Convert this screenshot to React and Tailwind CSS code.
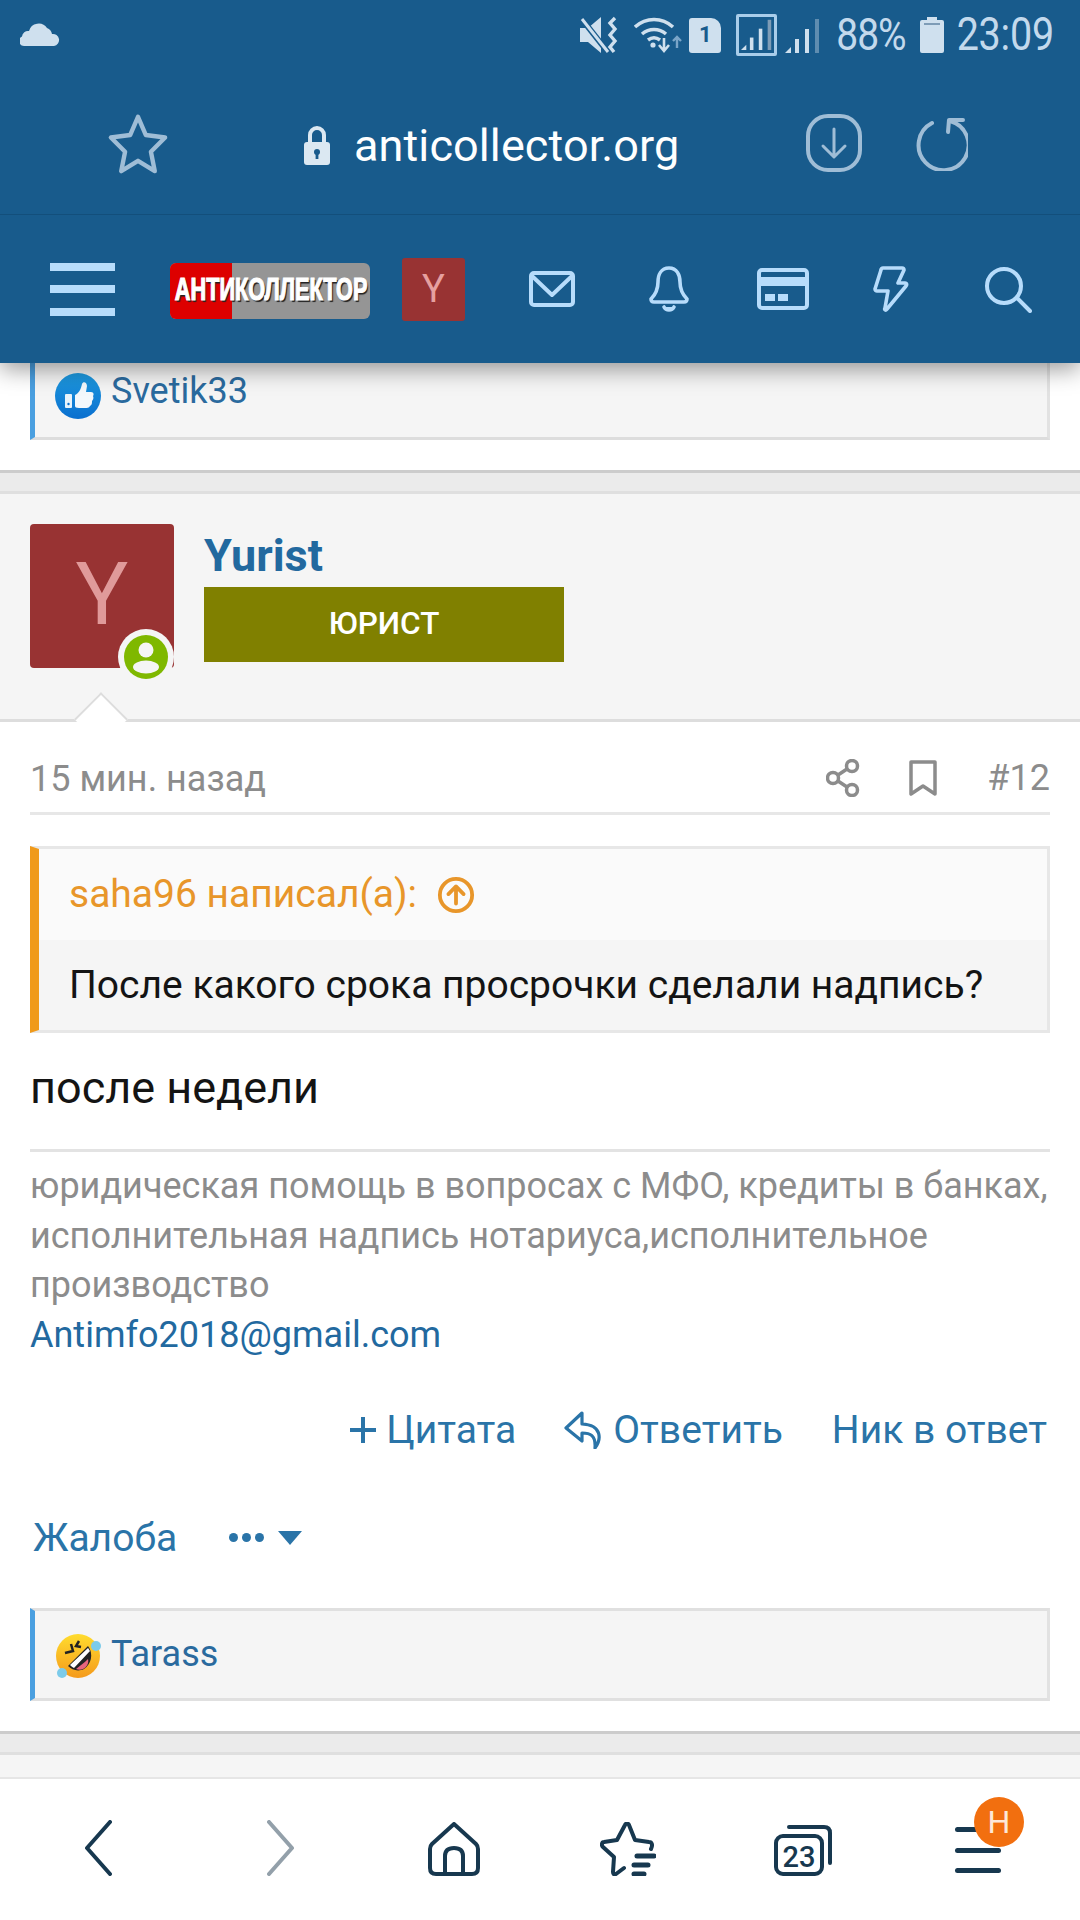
import React from "react";

const NavIcon = ({ className, children, vb = "0 0 48 48", sw = 4 }) => (
  <svg viewBox={vb} className={className} fill="none" stroke="currentColor" strokeWidth={sw} strokeLinecap="round" strokeLinejoin="round">
    {children}
  </svg>
);

function StatusBar() {
  return (
    <div className="h-[70px] flex items-center pl-[20px] pr-[26px] text-[#c3d9ec]">
      <svg viewBox="0 0 40 24" className="w-[40px] h-[24px] mt-[-2px]" fill="#cfe0ee">
        <path d="M4 24a5 5 0 0 1-2-9.5A6 6 0 0 1 9 9a10 10 0 0 1 18-3 8 8 0 0 1 5 6 6 6 0 0 1 2 12z" />
      </svg>
      <div className="ml-auto flex items-center h-full">
        <svg viewBox="0 0 40 38" className="w-[40px] h-[38px]" fill="#cfe0ee">
          <path d="M0 12h8L21 1v36L8 26H0z" />
          <path d="M1 2l26 33" stroke="#185b8c" strokeWidth="6" />
          <path d="M2 3l26 33" stroke="#cfe0ee" strokeWidth="3" />
          <path d="M35 2l-5 5 5 6-5 6 5 6-5 6 4 5" fill="none" stroke="#cfe0ee" strokeWidth="3.4" />
        </svg>
        <svg viewBox="0 0 48 38" className="w-[48px] h-[38px] ml-[14px]" fill="none" stroke="#cfe0ee" strokeWidth="3.5">
          <path d="M1 11c11-10 27-10 38 0" />
          <path d="M8 18c7-6 17-6 24 0" />
          <path d="M14 24c4-3 8-3 12 0" />
          <circle cx="19" cy="29" r="2.6" fill="#cfe0ee" stroke="none" />
          <path d="M30 22v12M25 29l5 6 5-6" strokeWidth="2.6" />
          <path d="M43 32V21M39 25l4-4 4 4" stroke="#7aa5c8" strokeWidth="2.4" />
        </svg>
        <div className="ml-[7px] w-[32px] h-[35px] bg-[#cfe0ee] rounded-[3px] rounded-tr-[10px] flex items-center justify-center text-[#185b8c] text-[22px] font-bold leading-none">1</div>
        <div className="ml-[15px] w-[41px] h-[42px] border-[3px] border-[#a9cdea] rounded-[2px] flex items-end justify-center pb-[2px]">
          <Bars dim />
        </div>
        <div className="ml-[8px] h-[38px] w-[36px] flex items-end"><Bars small /></div>
        <span className="ml-[15px] text-[39px] leading-none scale-y-[1.15] tracking-[-1px]">88%</span>
        <svg viewBox="0 0 24 36" className="ml-[14px] w-[24px] h-[36px]" fill="#cfe0ee">
          <path d="M7 0h10v3h5a2 2 0 0 1 2 2v29a2 2 0 0 1-2 2H2a2 2 0 0 1-2-2V5a2 2 0 0 1 2-2h5z" />
          <rect x="4" y="6" width="16" height="2" fill="#7e9cb6" />
        </svg>
        <span className="ml-[13px] text-[39.5px] leading-none scale-y-[1.15] tracking-[-0.2px]">23:09</span>
      </div>
    </div>
  );
}

function Bars({ dim, small }) {
  return (
    <svg viewBox="0 0 36 36" className={small ? "w-[36px] h-[38px]" : "w-[32px] h-[34px]"} fill="#cfe0ee">
      <path d="M0 36l6-6v6z" />
      <rect x="10" y="22" width="4" height="14" />
      <rect x="20" y="12" width="4" height="24" />
      <rect x="30" y="2" width="4" height="34" fill={dim ? "#7e9cb6" : "#5f8db0"} />
    </svg>
  );
}

function UrlBar() {
  return (
    <div className="h-[145px] relative flex items-center border-b border-[#134f7b] pt-[6px] text-[#9fbdd6]">
      <NavIcon className="ml-[107px] w-[62px] h-[62px] mt-[-2px]" vb="0 0 48 48" sw={3.4}>
        <path d="M24 3l6 14 15 2-11 11 3 15-13-8-13 8 3-15L3 19l15-2z" />
      </NavIcon>
      <svg viewBox="0 0 28 40" className="ml-[134px] w-[28px] h-[40px]">
        <path d="M7 18v-8a7 7 0 0 1 14 0v8" fill="none" stroke="#dbe8f2" strokeWidth="4" />
        <rect x="1" y="17" width="26" height="23" rx="3" fill="#dbe8f2" />
        <circle cx="14" cy="27" r="3" fill="#185b8c" />
        <rect x="12.6" y="27" width="2.8" height="7" fill="#185b8c" />
      </svg>
      <span className="ml-[23px] text-[45px] leading-none text-white tracking-[0.1px]">anticollector.org</span>
      <NavIcon className="ml-auto w-[56px] h-[58px] mt-[-4px]" vb="0 0 56 58" sw={4}>
        <rect x="2" y="2" width="52" height="54" rx="20" />
        <path d="M28 15v27M17 32l11 11 11-11" strokeWidth="3" />
      </NavIcon>
      <NavIcon className="ml-[50px] mr-[112px] w-[56px] h-[56px] mt-[-4px]" vb="0 0 56 56" sw={4}>
        <path d="M20 8A25 25 0 1 0 38 6" />
        <path d="M36 17l1-12 14 0" strokeWidth="4" />
      </NavIcon>
    </div>
  );
}

function TopNav() {
  return (
    <div className="h-[148px] flex items-center pl-[50px] text-[#b7dcfb]">
      <div className="w-[65px] h-[53px] flex flex-col justify-between">
        <div className="h-[8px] bg-[#b7dcfb]" />
        <div className="h-[8px] bg-[#b7dcfb]" />
        <div className="h-[8px] bg-[#b7dcfb]" />
      </div>
      <div className="ml-[55px] w-[200px] h-[56px] rounded-[6px] overflow-hidden bg-[#959595] flex mt-[3px] relative">
        <div className="w-[62px] bg-[#dd0000]" />
        <div className="flex-1" />
        <span className="absolute left-[-36px] w-[272px] top-[11px] text-center text-[31px] leading-[32px] font-bold text-white scale-x-[0.7] [font-family:'Liberation_Sans',sans-serif] [-webkit-text-stroke:1.2px_#ffffff] [text-shadow:2px_2px_1px_#222222]">АНТИКОЛЛЕКТОР</span>
      </div>
      <div className="ml-[32px] w-[63px] h-[63px] rounded-[3px] bg-[#983333] text-[#e6a0a0] text-[38px] flex items-center justify-center">Y</div>
      <NavIcon className="ml-[64px] w-[46px] h-[36px]" vb="0 0 46 36" sw={4}>
        <rect x="2" y="2" width="42" height="32" rx="3" />
        <path d="M3 5l20 19L43 5" />
      </NavIcon>
      <NavIcon className="ml-[73px] w-[42px] h-[46px]" vb="0 0 42 46" sw={3.6}>
        <path d="M21 2c-8 0-11 7-11 14 0 8-3 13-7 17 0 2 1 3 3 3h30c2 0 3-1 3-3-4-4-7-9-7-17 0-7-3-14-11-14z" />
        <path d="M16 41c2 4 8 4 10 0" fill="currentColor" />
      </NavIcon>
      <svg viewBox="0 0 52 42" className="ml-[67px] w-[52px] h-[42px]">
        <rect x="2" y="2" width="48" height="38" rx="3" fill="none" stroke="#b7dcfb" strokeWidth="4" />
        <rect x="2" y="9" width="48" height="9" fill="#b7dcfb" />
        <rect x="8" y="26" width="10" height="7" fill="#b7dcfb" />
        <rect x="21" y="26" width="10" height="7" fill="#b7dcfb" />
      </svg>
      <NavIcon className="ml-[64px] w-[36px] h-[46px]" vb="0 0 36 46" sw={3.6}>
        <path d="M10 2h19c2 0 2 1 2 2l-6 13h7c2 0 2 2 1 3L14 43c-1 2-3 1-2-1l3-17H4c-1 0-2-1-2-2L8 4c0-1 1-2 2-2z" />
      </NavIcon>
      <NavIcon className="ml-[75px] w-[48px] h-[47px]" vb="0 0 48 47" sw={4}>
        <circle cx="20" cy="20" r="17" />
        <path d="M33 32l13 13" />
      </NavIcon>
    </div>
  );
}

function ThumbIcon() {
  return (
    <svg viewBox="0 0 46 46" className="w-[46px] h-[46px]">
      <defs>
        <linearGradient id="thumb" x1="0" y1="0" x2="0" y2="1">
          <stop offset="0" stopColor="#1f9be0" />
          <stop offset="1" stopColor="#0a6fcf" />
        </linearGradient>
      </defs>
      <circle cx="23" cy="23" r="23" fill="url(#thumb)" />
      <rect x="10" y="21" width="7" height="14" rx="1" fill="#e8f3fb" />
      <circle cx="13.5" cy="31" r="1.2" fill="#0a6fcf" />
      <path d="M20 22c4-2 6-6 7-11 1-3 5-2 5 2l-1 6h5c3 0 3 3 2 4 1 2 0 4-1 5 0 2 0 4-2 5-1 2-3 2-5 2h-6c-3 0-4-1-4-2z" fill="#f3f8fc" />
    </svg>
  );
}

function LaughIcon() {
  return (
    <svg viewBox="0 0 46 46" className="w-[46px] h-[46px] mt-[4px]">
      <defs>
        <linearGradient id="laugh" x1="0" y1="0" x2="0" y2="1">
          <stop offset="0" stopColor="#ffdc2e" />
          <stop offset="1" stopColor="#f59a1c" />
        </linearGradient>
      </defs>
      <circle cx="23" cy="23" r="22" fill="url(#laugh)" />
      <path d="M13 33L33 13c6 8 3 18-4 23-6 3-12 1-16-3z" fill="#222" />
      <path d="M15 32l18-17c1 1 1 2 2 3L19 35c-2-1-3-2-4-3z" fill="#fff" />
      <path d="M21 36c4-3 9-7 12-10 1 4-1 8-5 10-2 1-5 1-7 0z" fill="#e8657d" />
      <path d="M10 20l8-2-2-7M24 8l-3 5 5 1" fill="none" stroke="#222" strokeWidth="2.5" />
      <circle cx="41" cy="13" r="5" fill="#7ccbea" />
      <circle cx="7" cy="40" r="5" fill="#7ccbea" />
    </svg>
  );
}

function ReactionBar({ icon, name, className }) {
  return (
    <div className={`mx-[30px] bg-[#f5f5f5] border-l-[5px] border-l-[#4a9fe0] flex items-center gap-[10px] pl-[20px] ${className}`}>
      {icon}
      <span className="text-[36px] leading-none text-[#2a6a9e]">{name}</span>
    </div>
  );
}

function Separator() {
  return <div className="h-[24px] bg-[#ebebeb] border-t-[3px] border-t-[#cccccc] border-b-[3px] border-b-[#dfdfdf]" />;
}

function PostHeader() {
  return (
    <div className="h-[228px] bg-[#f5f5f5] border-b-[3px] border-b-[#dddddd] relative pl-[30px] pt-[30px] flex">
      <div className="relative w-[144px] h-[144px] rounded-[4px] bg-[#983333] text-[#e09a9a] text-[88px] leading-none flex items-center justify-center pb-[4px]">
        Y
        <div className="absolute left-[88px] top-[105px] w-[56px] h-[56px] rounded-full bg-[#f5f5f5] flex items-center justify-center">
          <svg viewBox="0 0 44 44" className="w-[44px] h-[44px]">
            <circle cx="22" cy="22" r="22" fill="#7fb800" />
            <circle cx="22" cy="15" r="7.5" fill="#f5f5f5" />
            <ellipse cx="22" cy="32" rx="13" ry="6.5" fill="#f5f5f5" />
          </svg>
        </div>
      </div>
      <div className="ml-[30px] w-[360px] flex flex-col">
        <div className="h-[63px] text-[45px] leading-[63px] font-bold text-[#22699f]">Yurist</div>
        <div className="h-[75px] bg-[#808000] text-white text-[31.5px] font-medium flex items-center justify-center pb-[2px]">ЮРИСТ</div>
      </div>
      <div className="absolute left-[82px] bottom-[-19px] w-[38px] h-[38px] rotate-45 bg-white border-l-[2px] border-t-[2px] border-[#dddddd]" />
    </div>
  );
}

function PostMeta() {
  return (
    <div className="mx-[30px] h-[93px] pt-[24px] flex items-center border-b-[3px] border-b-[#e7e7e7] text-[#8c8c8c] text-[36px]">
      <span>15 мин. назад</span>
      <svg viewBox="0 0 34 38" className="ml-auto w-[34px] h-[38px] mt-[-2px]" fill="none" stroke="#8c8c8c" strokeWidth="3.5">
        <circle cx="26" cy="7" r="5.5" />
        <circle cx="7" cy="19" r="5.5" />
        <circle cx="26" cy="31" r="5.5" />
        <path d="M12 16l9-6M12 22l9 6" />
      </svg>
      <svg viewBox="0 0 28 36" className="ml-[49px] w-[28px] h-[36px] mt-[-2px]" fill="none" stroke="#8c8c8c" strokeWidth="3.5" strokeLinejoin="round">
        <path d="M2 2h24v32L14 26 2 34z" />
      </svg>
      <span className="ml-[50px] mt-[-2px]">#12</span>
    </div>
  );
}

function Quote() {
  return (
    <div className="mx-[30px] mt-[31px] border-l-[9px] border-l-[#f09a1a] border-y-[3px] border-r-[3px] border-y-[#e7e7e7] border-r-[#e7e7e7]">
      <div className="h-[91px] bg-[#fafafa] pl-[30px] flex items-center gap-[20px] text-[39px] text-[#e8962a]">
        <span>saha96 написал(а):</span>
        <svg viewBox="0 0 40 40" className="w-[38px] h-[38px]" fill="none" stroke="#e8962a" strokeWidth="4" strokeLinecap="round" strokeLinejoin="round">
          <circle cx="20" cy="20" r="17" />
          <path d="M20 29V12M12 19l8-8 8 8" />
        </svg>
      </div>
      <div className="h-[90px] bg-[#f5f5f5] pl-[30px] flex items-center text-[39px] text-[#141414]">
        После какого срока просрочки сделали надпись?
      </div>
    </div>
  );
}

function BottomBar() {
  return (
    <div className="mt-auto h-[143px] bg-white border-t-[2px] border-t-[#e6e6e6] flex items-end relative text-[#17384f] pb-[44px] pl-[84px]">
      <NavIcon className="w-[28px] h-[56px]" vb="0 0 28 56" sw={4}>
        <path d="M26 2L3 28l23 26" />
      </NavIcon>
      <NavIcon className="ml-[155px] w-[28px] h-[56px] text-[#93a0aa]" vb="0 0 28 56" sw={4}>
        <path d="M2 2l23 26L2 54" />
      </NavIcon>
      <NavIcon className="ml-[133px] w-[52px] h-[54px]" vb="0 0 52 54" sw={4}>
        <path d="M26 2L4 22c-1 1-2 3-2 5v19c0 4 2 6 6 6h36c4 0 6-2 6-6V27c0-2-1-4-2-5z" />
        <path d="M17 52V34c0-5 3-8 9-8s9 3 9 8v18" />
      </NavIcon>
      <svg viewBox="0 0 56 54" className="ml-[120px] w-[56px] h-[54px]" fill="none" stroke="#17384f" strokeWidth="4" strokeLinecap="round" strokeLinejoin="round">
        <path d="M24 46l-8 6c-2 1-3 0-3-2l1-15L3 25c-2-2-1-5 1-5l13-2 8-15c1-2 3-2 4 0l6 15 14 2c3 0 4 3 2 7" />
        <path d="M37 34h17M34 43h14M34 52h10" strokeWidth="5" />
      </svg>
      <svg viewBox="0 0 60 52" className="ml-[117px] w-[60px] h-[52px]" fill="none" stroke="#17384f" strokeWidth="4" strokeLinecap="round">
        <path d="M16 3h35c4 0 6 2 6 6v30" />
        <rect x="3" y="12" width="46" height="38" rx="7" />
        <text x="26" y="43" textAnchor="middle" fontSize="29" fontWeight="500" fill="#17384f" stroke="none" fontFamily="Roboto">23</text>
      </svg>
      <div className="ml-[122px] w-[46px] h-[46px] flex flex-col justify-between mb-[3px]">
        <div className="h-[5px] rounded-full bg-[#17384f]" />
        <div className="h-[5px] rounded-full bg-[#17384f]" />
        <div className="h-[5px] rounded-full bg-[#17384f]" />
      </div>
      <div className="absolute left-[974px] top-[18px] w-[50px] h-[50px] rounded-full bg-[#f26f0f] text-[#fde8d8] text-[32px] flex items-center justify-center">H</div>
    </div>
  );
}

export default function App() {
  return (
    <div className="w-[1080px] h-[1920px] overflow-hidden bg-white flex flex-col font-[family-name:Roboto,sans-serif]">
      <div className="relative z-10 h-[363px] bg-[#185b8c] shadow-[0_6px_22px_rgba(0,0,0,0.4)]">
        <StatusBar />
        <UrlBar />
        <TopNav />
      </div>

      <ReactionBar icon={<ThumbIcon />} name="Svetik33" className="h-[77px] border-b-[3px] border-b-[#dddddd] border-r-[3px] border-r-[#e2e2e2] pt-[10px] items-start" />
      <div className="h-[30px]" />
      <Separator />
      <PostHeader />
      <PostMeta />
      <Quote />

      <div className="mx-[30px] h-[119px] pb-[7px] flex items-center border-b-[3px] border-b-[#e3e3e3] text-[45px] text-[#141414]">после недели</div>

      <div className="mx-[30px] mt-[10px] text-[36px] leading-[49.7px] text-[#8c8c8c] whitespace-nowrap">
        <div>юридическая помощь в вопросах с МФО, кредиты в банках,</div>
        <div>исполнительная надпись нотариуса,исполнительное</div>
        <div>производство</div>
        <div className="text-[#22699f]">Antimfo2018@gmail.com</div>
      </div>

      <div className="mt-[44px] pr-[33px] flex justify-end items-center h-[50px] text-[39px] text-[#2a74a8]">
        <svg viewBox="0 0 26 26" className="w-[26px] h-[26px]" fill="#2a74a8">
          <path d="M11 0h4v11h11v4H15v11h-4V15H0v-4h11z" />
        </svg>
        <span className="ml-[10px]">Цитата</span>
        <svg viewBox="0 0 40 38" className="ml-[48px] w-[40px] h-[38px]" fill="none" stroke="#2a74a8" strokeWidth="3.2" strokeLinejoin="round">
          <path d="M18 2L2 17l16 13v-8c8 0 14 2 13 15 6-8 8-23-13-24z" />
        </svg>
        <span className="ml-[9px]">Ответить</span>
        <span className="ml-[49px]">Ник в ответ</span>
      </div>

      <div className="mt-[58px] pl-[33px] flex items-center h-[50px] text-[39px] text-[#2a74a8]">
        <span>Жалоба</span>
        <div className="ml-[52px] flex gap-[4px]">
          <div className="w-[9px] h-[9px] rounded-full bg-[#2a74a8]" />
          <div className="w-[9px] h-[9px] rounded-full bg-[#2a74a8]" />
          <div className="w-[9px] h-[9px] rounded-full bg-[#2a74a8]" />
        </div>
        <svg viewBox="0 0 24 14" className="ml-[14px] w-[24px] h-[14px]" fill="#2a74a8">
          <path d="M0 0h24L12 14z" />
        </svg>
      </div>

      <ReactionBar icon={<LaughIcon />} name="Tarass" className="mt-[45px] h-[93px] border-y-[3px] border-y-[#e0e0e0] border-r-[3px] border-r-[#e2e2e2]" />
      <div className="h-[30px]" />
      <Separator />
      <div className="h-[22px] bg-[#f5f5f5]" />
      <BottomBar />
    </div>
  );
}
